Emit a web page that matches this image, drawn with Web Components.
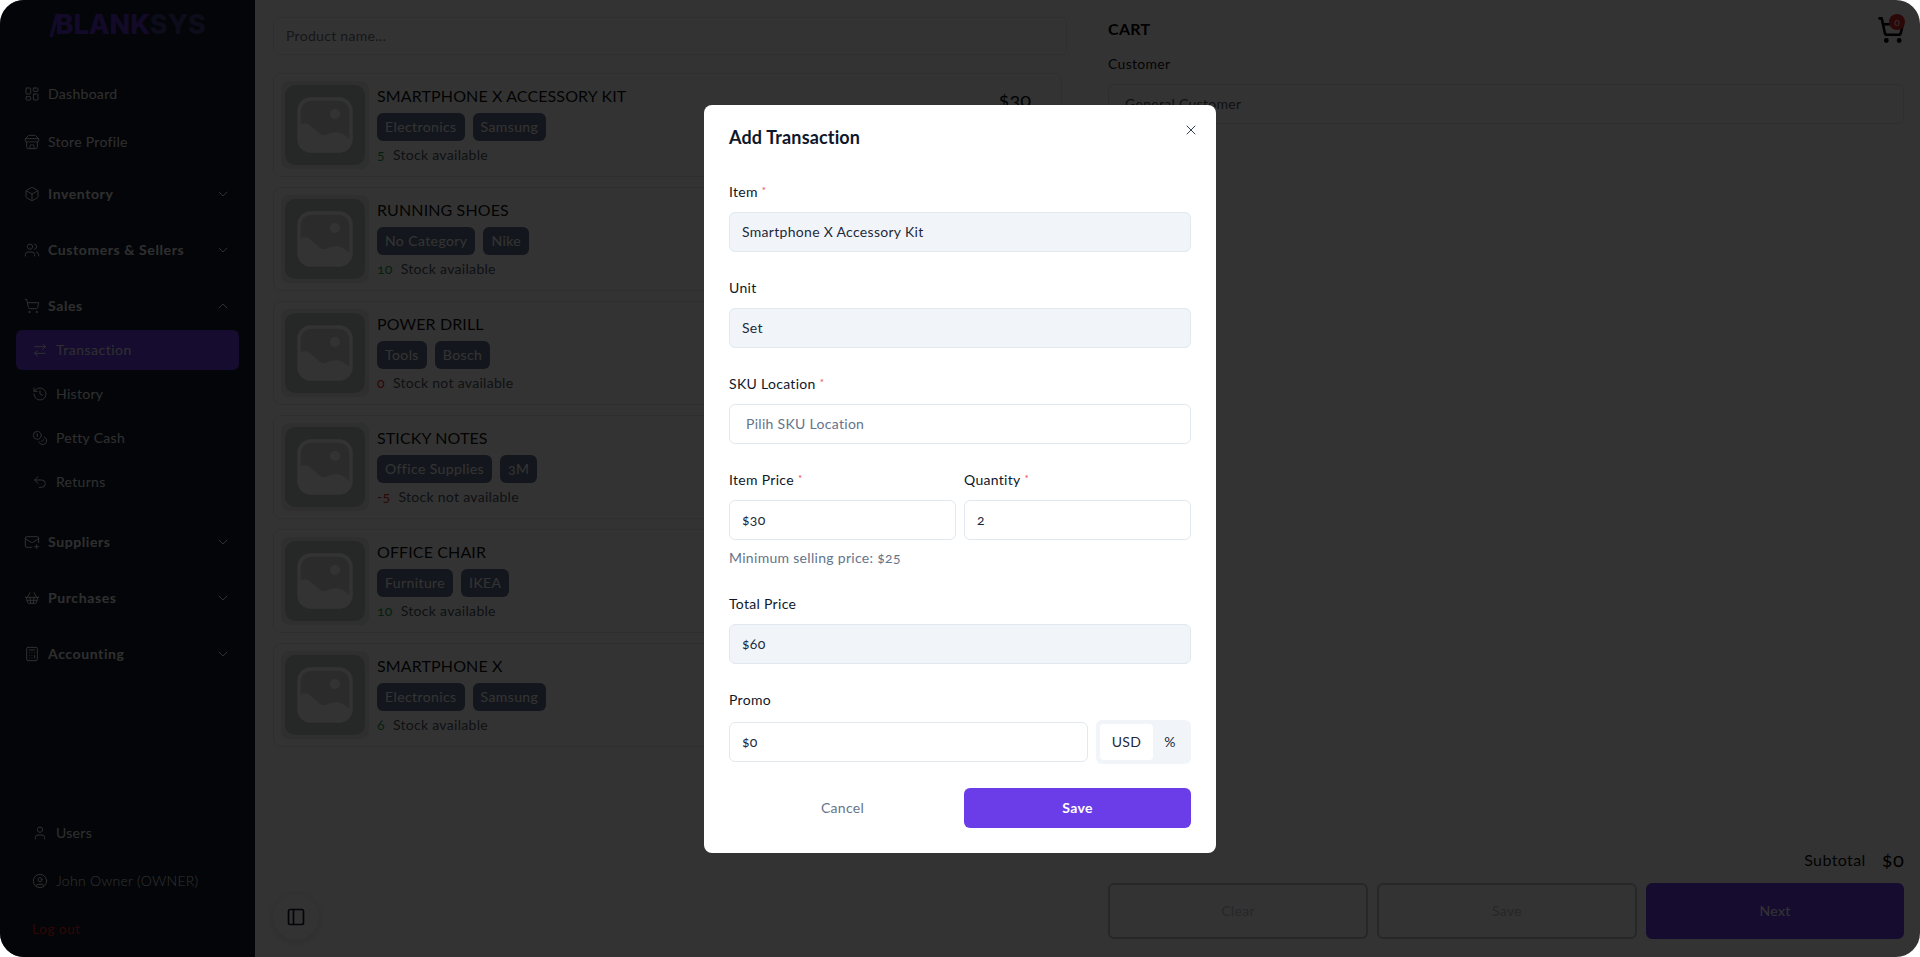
<!DOCTYPE html>
<html>
<head>
<meta charset="utf-8">
<title>Add Transaction</title>
<style>
	html, body { margin: 0; padding: 0; background: #fff; height: 100%; overflow: hidden; }
	body { font-family: Lato, "Open Sans", sans-serif; font-size: 14px; letter-spacing: .3px; color: #0f172a; font-variant-numeric: oldstyle-nums; }
</style>
</head>
<body>
<app-frame>
	<side-nav>
		<nav-item icon="dashboard" label="Dashboard"></nav-item>
		<nav-item icon="store" label="Store Profile"></nav-item>
		<nav-item icon="box" label="Inventory" group="down"></nav-item>
		<nav-item icon="users" label="Customers &amp; Sellers" group="down"></nav-item>
		<nav-item icon="cart" label="Sales" group="up"></nav-item>
		<nav-sub>
			<nav-item sub active icon="swap" label="Transaction"></nav-item>
			<nav-item sub icon="history" label="History"></nav-item>
			<nav-item sub icon="coins" label="Petty Cash"></nav-item>
			<nav-item sub icon="undo" label="Returns"></nav-item>
		</nav-sub>
		<nav-item icon="mail" label="Suppliers" group="down"></nav-item>
		<nav-item icon="basket" label="Purchases" group="down"></nav-item>
		<nav-item icon="calc" label="Accounting" group="down"></nav-item>
		<nav-item slot="footer" sub icon="user" label="Users"></nav-item>
		<nav-item slot="footer" sub thin icon="account" label="John Owner (OWNER)"></nav-item>
		<nav-item slot="footer" sub danger label="Log out"></nav-item>
	</side-nav>
	<product-list>
		<product-card name="SMARTPHONE X ACCESSORY KIT" tags="Electronics,Samsung" stock="5" price="$30"></product-card>
		<product-card name="RUNNING SHOES" tags="No Category,Nike" stock="10"></product-card>
		<product-card name="POWER DRILL" tags="Tools,Bosch" stock="0"></product-card>
		<product-card name="STICKY NOTES" tags="Office Supplies,3M" stock="-5"></product-card>
		<product-card name="OFFICE CHAIR" tags="Furniture,IKEA" stock="10"></product-card>
		<product-card name="SMARTPHONE X" tags="Electronics,Samsung" stock="6"></product-card>
	</product-list>
	<cart-panel></cart-panel>
	<tx-modal>
		<form-field label="Item" required><text-box disabled>Smartphone X Accessory Kit</text-box></form-field>
		<form-field label="Unit"><text-box disabled>Set</text-box></form-field>
		<form-field label="SKU Location" required><text-box placeholder>Pilih SKU Location</text-box></form-field>
		<field-row>
			<form-field label="Item Price" required hint="Minimum selling price: $25"><text-box>$30</text-box></form-field>
			<form-field label="Quantity" required><text-box>2</text-box></form-field>
		</field-row>
		<form-field label="Total Price"><text-box disabled>$60</text-box></form-field>
		<form-field label="Promo"><promo-input value="$0"></promo-input></form-field>
	</tx-modal>
</app-frame>
<script>
const ICONS = {
	dashboard: '<rect x="3" y="3" width="7" height="9" rx="1"/><rect x="14" y="3" width="7" height="5" rx="1"/><rect x="14" y="12" width="7" height="9" rx="1"/><rect x="3" y="16" width="7" height="5" rx="1"/>',
	store: '<path d="m2 7 4.41-4.41A2 2 0 0 1 7.83 2h8.34a2 2 0 0 1 1.42.59L22 7"/><path d="M4 12v8a2 2 0 0 0 2 2h12a2 2 0 0 0 2-2v-8"/><path d="M15 22v-4a2 2 0 0 0-2-2h-2a2 2 0 0 0-2 2v4"/><path d="M2 7h20"/><path d="M22 7v3a2 2 0 0 1-2 2 2.7 2.7 0 0 1-2-.8 2.7 2.7 0 0 1-2 .8 2.7 2.7 0 0 1-2-.8 2.7 2.7 0 0 1-2 .8 2.7 2.7 0 0 1-2-.8 2.7 2.7 0 0 1-2 .8 2.7 2.7 0 0 1-2-.8 2.7 2.7 0 0 1-2 .8 2 2 0 0 1-2-2V7"/>',
	box: '<path d="M21 8a2 2 0 0 0-1-1.73l-7-4a2 2 0 0 0-2 0l-7 4A2 2 0 0 0 3 8v8a2 2 0 0 0 1 1.73l7 4a2 2 0 0 0 2 0l7-4A2 2 0 0 0 21 16Z"/><path d="m3.3 7 8.7 5 8.7-5"/><path d="M12 22V12"/>',
	users: '<path d="M16 21v-2a4 4 0 0 0-4-4H6a4 4 0 0 0-4 4v2"/><circle cx="9" cy="7" r="4"/><path d="M22 21v-2a4 4 0 0 0-3-3.87"/><path d="M16 3.13a4 4 0 0 1 0 7.75"/>',
	cart: '<circle cx="8" cy="21" r="1"/><circle cx="19" cy="21" r="1"/><path d="M2.05 2.05h2l2.66 12.42a2 2 0 0 0 2 1.58h9.78a2 2 0 0 0 1.95-1.57l1.65-7.43H5.12"/>',
	swap: '<path d="m16 3 4 4-4 4"/><path d="M20 7H4"/><path d="m8 21-4-4 4-4"/><path d="M4 17h16"/>',
	history: '<path d="M3 12a9 9 0 1 0 9-9 9.75 9.75 0 0 0-6.74 2.74L3 8"/><path d="M3 3v5h5"/><path d="M12 7v5l4 2"/>',
	coins: '<circle cx="8" cy="8" r="6"/><path d="M18.09 10.37A6 6 0 1 1 10.34 18"/><path d="M7 6h1v4"/><path d="m16.71 13.88.7.71-2.82 2.82"/>',
	undo: '<path d="M9 14 4 9l5-5"/><path d="M4 9h10.5a5.5 5.5 0 0 1 5.5 5.5 5.5 5.5 0 0 1-5.5 5.5H11"/>',
	mail: '<path d="M22 13V6a2 2 0 0 0-2-2H4a2 2 0 0 0-2 2v12c0 1.1.9 2 2 2h8"/><path d="m22 7-8.97 5.7a1.94 1.94 0 0 1-2.06 0L2 7"/><path d="M19 16v6"/><path d="M16 19h6"/>',
	basket: '<path d="m15 11-1 9"/><path d="m19 11-4-7"/><path d="M2 11h20"/><path d="m3.5 11 1.6 7.4a2 2 0 0 0 2 1.6h9.8a2 2 0 0 0 2-1.6l1.7-7.4"/><path d="M4.5 15.5h15"/><path d="m5 11 4-7"/><path d="m9 11 1 9"/>',
	calc: '<rect x="4" y="2" width="16" height="20" rx="2"/><path d="M8 6h8"/><path d="M16 14v4"/><path d="M16 10h.01"/><path d="M12 10h.01"/><path d="M8 10h.01"/><path d="M12 14h.01"/><path d="M8 14h.01"/><path d="M12 18h.01"/><path d="M8 18h.01"/>',
	user: '<path d="M19 21v-2a4 4 0 0 0-4-4H9a4 4 0 0 0-4 4v2"/><circle cx="12" cy="7" r="4"/>',
	account: '<circle cx="12" cy="12" r="10"/><circle cx="12" cy="10" r="3"/><path d="M7 20.662V19a2 2 0 0 1 2-2h6a2 2 0 0 1 2 2v1.662"/>',
	panel: '<rect x="3" y="3" width="18" height="18" rx="2"/><path d="M9 3v18"/>',
	down: '<path d="m6 9 6 6 6-6"/>',
	up: '<path d="m18 15-6-6-6 6"/>',
	close: '<path d="M18 6 6 18"/><path d="m6 6 12 12"/>'
};

class UiIcon extends HTMLElement {
	constructor() {
		super();
		this.attachShadow({ mode: 'open' });
	}
	connectedCallback() {
		const size = this.getAttribute('size') || 16;
		const weight = this.getAttribute('weight') || 1.5;
		this.shadowRoot.innerHTML = `
			<style>
				:host { display: inline-flex; flex: none; }
				svg { display: block; fill: none; stroke: currentColor; stroke-linecap: round; stroke-linejoin: round; }
			</style>
			<svg width="${size}" height="${size}" viewBox="0 0 24 24" stroke-width="${weight}">${ICONS[this.getAttribute('name')]}</svg>
		`;
	}
}

class AppFrame extends HTMLElement {
	constructor() {
		super();
		this.attachShadow({ mode: 'open' }).innerHTML = `
			<style>
				:host {
					background: #fff;
					border-radius: 24px;
					display: grid;
					grid-template-columns: 255px 835px 830px;
					height: 957px;
					overflow: hidden;
					position: relative;
				}
			</style>
			<slot></slot>
		`;
	}
}

class SideNav extends HTMLElement {
	constructor() {
		super();
		this.attachShadow({ mode: 'open' }).innerHTML = `
			<style>
				:host {
					background: #0f1a28;
					color: #e8e8ea;
					display: flex;
					flex-direction: column;
					height: 957px;
					padding-bottom: 8px;
					box-sizing: border-box;
				}
				.logo {
					color: #5a34c8;
					flex: none;
					font-family: Inter, sans-serif;
					font-size: 27px;
					font-weight: 800;
					height: 74px;
					letter-spacing: 0;
					line-height: 49px;
					padding-left: 49px;
					box-sizing: border-box;
				}
				.logo i { font-style: normal; font-weight: 700; letter-spacing: -4px; }
				.logo span { color: #3c3c80; }
				.items { display: flex; flex-direction: column; gap: 8px; }
				.footer { display: flex; flex-direction: column; gap: 8px; margin-top: auto; }
			</style>
			<div class="logo"><i>/</i>BLANK<span>SYS</span></div>
			<div class="items"><slot></slot></div>
			<div class="footer"><slot name="footer"></slot></div>
		`;
	}
}

class NavSub extends HTMLElement {
	constructor() {
		super();
		this.attachShadow({ mode: 'open' }).innerHTML = `
			<style>
				:host { display: flex; flex-direction: column; gap: 4px; margin-top: -8px; padding-bottom: 8px; }
			</style>
			<slot></slot>
		`;
	}
}

class NavItem extends HTMLElement {
	constructor() {
		super();
		this.attachShadow({ mode: 'open' });
	}
	connectedCallback() {
		const icon = this.getAttribute('icon');
		const group = this.getAttribute('group');
		this.shadowRoot.innerHTML = `
			<style>
				:host { display: block; }
				.row {
					align-items: center;
					border-radius: 6px;
					display: flex;
					gap: 8px;
					height: 40px;
					line-height: 20px;
					padding: 0 24px;
				}
				.row.group { font-weight: 700; height: 48px; letter-spacing: .6px; }
				.row.sub { margin: 0 16px; padding: 0 16px; }
				.row.active { background: #6a3de8; letter-spacing: .5px; }
				.row.thin { font-weight: 300; }
				.row.danger { color: #dc2626; }
				.label { flex: 1; white-space: nowrap; }
			</style>
			<div class="row ${group ? 'group' : ''} ${this.hasAttribute('sub') ? 'sub' : ''} ${this.hasAttribute('active') ? 'active' : ''} ${this.hasAttribute('thin') ? 'thin' : ''} ${this.hasAttribute('danger') ? 'danger' : ''}">
				${icon ? `<ui-icon name="${icon}"></ui-icon>` : ''}
				<span class="label">${this.getAttribute('label').replace('&', '&amp;')}</span>
				${group ? `<ui-icon name="${group}" weight="1.5"></ui-icon>` : ''}
			</div>
		`;
	}
}

class ProductList extends HTMLElement {
	constructor() {
		super();
		this.attachShadow({ mode: 'open' }).innerHTML = `
			<style>
				:host {
					display: block;
					padding: 17px 28px 0 18px;
					position: relative;
				}
				.search {
					border: 1px solid #e5e7eb;
					border-radius: 6px;
					box-sizing: border-box;
					color: #6b7280;
					height: 38px;
					line-height: 36px;
					margin: 0 -5px 18px 0;
					padding-left: 12px;
				}
				.rows { display: flex; flex-direction: column; gap: 10px; }
				.toggle {
					align-items: center;
					background: #fff;
					border-radius: 50%;
					bottom: 17px;
					box-shadow: 0 2px 8px rgba(0, 0, 0, .15);
					color: #0f172a;
					display: flex;
					height: 46px;
					justify-content: center;
					left: 18px;
					position: absolute;
					width: 46px;
				}
			</style>
			<div class="search">Product name...</div>
			<div class="rows"><slot></slot></div>
			<div class="toggle"><ui-icon name="panel" size="20" weight="2"></ui-icon></div>
		`;
	}
}

class ProductCard extends HTMLElement {
	constructor() {
		super();
		this.attachShadow({ mode: 'open' });
	}
	connectedCallback() {
		const stock = parseInt(this.getAttribute('stock'), 10);
		const available = stock > 0;
		const price = this.getAttribute('price');
		const tags = this.getAttribute('tags').split(',');
		this.shadowRoot.innerHTML = `
			<style>
				:host {
					align-items: center;
					border: 1px solid #e5e7eb;
					border-radius: 8px;
					box-sizing: border-box;
					display: flex;
					gap: 8px;
					height: 104px;
					padding: 0 30px 0 7px;
				}
				.thumb {
					background: #e5e8e6;
					border-radius: 8px;
					box-sizing: border-box;
					flex: none;
					height: 88px;
					padding: 4px;
					width: 88px;
				}
				.thumb div {
					align-items: center;
					background: #bfc3c2;
					border-radius: 10px;
					display: flex;
					height: 80px;
					justify-content: center;
				}
				.info { flex: 1; margin-top: -2px; min-width: 0; }
				.name { color: #111; font-size: 16px; letter-spacing: .12px; line-height: 24px; }
				.tags { display: flex; gap: 8px; margin: 5px 0 4px; }
				.tag {
					background: #5f6f8a;
					border-radius: 6px;
					color: #fff;
					letter-spacing: .4px;
					line-height: 28px;
					padding: 0 8px;
				}
				.stock { color: #4b5563; display: flex; gap: 8px; line-height: 20px; }
				.stock b { color: ${available ? '#16a34a' : '#dc2626'}; font-weight: 400; }
				.price { align-self: flex-start; color: #111; font-size: 20px; letter-spacing: 0; line-height: 28px; padding-top: 11px; }
			</style>
			<div class="thumb"><div>
				<svg width="60" height="60" viewBox="0 0 60 60">
					<rect x="4" y="4" width="52" height="52" rx="12" fill="#d5d7d7" stroke="#fff" stroke-width="3.5"/>
					<circle cx="40" cy="19" r="5" fill="#fff"/>
					<path d="M5 30c4-3 8-2 12 2l8 7c1 1 3 2 5 1l6-2c6-2 13 0 19 7v2c0 6-3 8-9 8H14c-6 0-9-2-9-8Z" fill="#fff"/>
				</svg>
			</div></div>
			<div class="info">
				<div class="name">${this.getAttribute('name')}</div>
				<div class="tags">${tags.map((tag) => `<span class="tag">${tag}</span>`).join('')}</div>
				<div class="stock"><b>${stock}</b><span>Stock ${available ? 'available' : 'not available'}</span></div>
			</div>
			${price ? `<div class="price">${price}</div>` : ''}
		`;
	}
}

class CartPanel extends HTMLElement {
	constructor() {
		super();
		this.attachShadow({ mode: 'open' }).innerHTML = `
			<style>
				:host {
					box-sizing: border-box;
					display: flex;
					flex-direction: column;
					height: 957px;
					padding: 17px 16px 18px 18px;
				}
				.head { align-items: flex-start; display: flex; height: 26px; justify-content: space-between; }
				.title { color: #000; font-size: 16px; font-weight: 700; line-height: 24px; }
				.cart { color: #000; margin: -1px -1px 0 0; position: relative; }
				.badge {
					align-items: center;
					background: #dc2626;
					border-radius: 50%;
					color: #fff;
					display: flex;
					font-size: 10px;
					height: 16px;
					justify-content: center;
					position: absolute;
					right: 0;
					top: -2px;
					width: 16px;
				}
				label { color: #111; display: block; line-height: 20px; margin: 11px 0 10px; }
				.customer {
					border: 1px solid #e5e7eb;
					border-radius: 6px;
					box-sizing: border-box;
					color: #4b5563;
					height: 40px;
					line-height: 38px;
					padding-left: 16px;
				}
				.subtotal { align-items: center; display: flex; gap: 16px; height: 28px; justify-content: flex-end; margin: auto 0 10px; }
				.subtotal span { color: #111; font-size: 16px; letter-spacing: .4px; }
				.subtotal b { color: #000; font-size: 20px; font-weight: 400; }
				.actions { display: grid; gap: 9px; grid-template-columns: 260px 260px 1fr; }
				.actions div {
					border: 2px solid #b8c2cc;
					border-radius: 6px;
					box-sizing: border-box;
					color: #b8c2cc;
					height: 56px;
					line-height: 52px;
					text-align: center;
				}
				.actions .next { background: #6a3de8; border-color: #6a3de8; color: #fff; }
			</style>
			<div class="head">
				<span class="title">CART</span>
				<span class="cart"><ui-icon name="cart" size="28" weight="2.2"></ui-icon><span class="badge">0</span></span>
			</div>
			<label>Customer</label>
			<div class="customer">General Customer</div>
			<div class="subtotal"><span>Subtotal</span><b>$0</b></div>
			<div class="actions"><div>Clear</div><div>Save</div><div class="next">Next</div></div>
		`;
	}
}

class TxModal extends HTMLElement {
	constructor() {
		super();
		this.attachShadow({ mode: 'open' }).innerHTML = `
			<style>
				:host {
					align-items: center;
					background: rgba(0, 0, 0, .8);
					display: flex;
					inset: 0;
					justify-content: center;
					position: absolute;
				}
				.dialog {
					background: #fff;
					border-radius: 8px;
					box-sizing: border-box;
					padding: 18px 25px 25px;
					position: relative;
					width: 512px;
				}
				h2 { color: #0f172a; font-size: 18px; font-weight: 700; letter-spacing: .15px; line-height: 28px; margin: 0 0 31px; }
				.close { color: #334155; position: absolute; right: 17px; top: 17px; }
				.fields { display: flex; flex-direction: column; gap: 26px; }
				.buttons { display: grid; gap: 8px; grid-template-columns: 1fr 1fr; margin-top: 24px; }
				.buttons div { border-radius: 6px; height: 40px; line-height: 40px; text-align: center; }
				.cancel { color: #64748b; }
				.save { background: #6a3de8; color: #fff; font-weight: 700; }
			</style>
			<div class="dialog">
				<ui-icon class="close" name="close" size="16"></ui-icon>
				<h2>Add Transaction</h2>
				<div class="fields"><slot></slot></div>
				<div class="buttons"><div class="cancel">Cancel</div><div class="save">Save</div></div>
			</div>
		`;
	}
}

class FieldRow extends HTMLElement {
	constructor() {
		super();
		this.attachShadow({ mode: 'open' }).innerHTML = `
			<style>
				:host { display: grid; gap: 8px; grid-template-columns: 1fr 1fr; }
			</style>
			<slot></slot>
		`;
	}
}

class FormField extends HTMLElement {
	constructor() {
		super();
		this.attachShadow({ mode: 'open' });
	}
	connectedCallback() {
		const hint = this.getAttribute('hint');
		this.shadowRoot.innerHTML = `
			<style>
				:host { display: block; min-width: 0; }
				label { color: #0f172a; display: block; line-height: 20px; margin-bottom: 10px; }
				i { color: #ef4444; font-size: 10px; font-style: normal; line-height: 0; margin-left: 4px; vertical-align: 3px; }
				.hint { color: #64748b; line-height: 20px; margin-top: 8px; }
			</style>
			<label>${this.getAttribute('label')}${this.hasAttribute('required') ? '<i>*</i>' : ''}</label>
			<slot></slot>
			${hint ? `<div class="hint">${hint}</div>` : ''}
		`;
	}
}

class TextBox extends HTMLElement {
	constructor() {
		super();
		this.attachShadow({ mode: 'open' }).innerHTML = `
			<style>
				:host {
					background: #fff;
					border: 1px solid #e2e8f0;
					border-radius: 6px;
					box-sizing: border-box;
					color: #1e293b;
					display: block;
					height: 40px;
					line-height: 38px;
					padding: 0 12px;
				}
				:host([disabled]) { background: #f1f5f9; }
				:host([placeholder]) { color: #64748b; padding-left: 16px; }
			</style>
			<slot></slot>
		`;
	}
}

class PromoInput extends HTMLElement {
	constructor() {
		super();
		this.attachShadow({ mode: 'open' });
	}
	connectedCallback() {
		this.shadowRoot.innerHTML = `
			<style>
				:host { align-items: center; display: flex; gap: 8px; }
				text-box { flex: 1; }
				.switch {
					background: #f1f5f9;
					border-radius: 6px;
					box-sizing: border-box;
					display: flex;
					flex: none;
					height: 44px;
					padding: 4px;
					width: 95px;
				}
				.switch span { color: #1e293b; line-height: 36px; text-align: center; }
				.on { background: #fff; border-radius: 4px; width: 53px; }
				.off { flex: 1; }
			</style>
			<text-box>${this.getAttribute('value')}</text-box>
			<div class="switch"><span class="on">USD</span><span class="off">%</span></div>
		`;
	}
}

customElements.define('ui-icon', UiIcon);
customElements.define('app-frame', AppFrame);
customElements.define('side-nav', SideNav);
customElements.define('nav-sub', NavSub);
customElements.define('nav-item', NavItem);
customElements.define('product-list', ProductList);
customElements.define('product-card', ProductCard);
customElements.define('cart-panel', CartPanel);
customElements.define('tx-modal', TxModal);
customElements.define('field-row', FieldRow);
customElements.define('form-field', FormField);
customElements.define('text-box', TextBox);
customElements.define('promo-input', PromoInput);
</script>
</body>
</html>
